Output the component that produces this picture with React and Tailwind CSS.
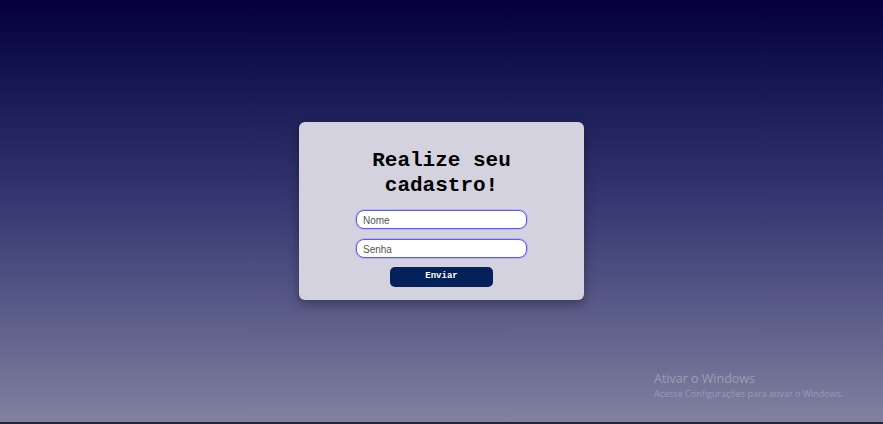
const App = () => {
  return (
    <div className="relative h-[424px] w-[883px] overflow-hidden bg-gradient-to-b from-[#06003c] via-[#3a3a74] to-[#82829f] font-['Liberation_Sans',sans-serif]">
      <div className="flex h-[422px] items-start justify-center pt-[122px]">
        {/* Cadastro Card */}
        <div className="flex w-[285px] flex-col items-center rounded-md bg-[#d4d2df] pb-[13px] pt-[26px] shadow-[0_4px_12px_rgba(0,0,0,0.35)]">
          <h1 className="text-center font-['Liberation_Mono',monospace] text-[21px] font-bold leading-[25px] text-black">
            Realize seu
            <br />
            cadastro!
          </h1>
          <div className="mt-[12px] flex flex-col items-center gap-[10px]">
            <input
              type="text"
              placeholder="Nome"
              className="h-[19px] w-[171px] rounded-[8px] border border-[#5a5af5] bg-white px-[6px] pt-[1px] text-[10px] text-black outline-none ring-1 ring-[#9a9af8]/50 placeholder:text-[#555]"
            />
            <input
              type="password"
              placeholder="Senha"
              className="h-[19px] w-[171px] rounded-[8px] border border-[#5a5af5] bg-white px-[6px] pt-[1px] text-[10px] text-black outline-none ring-1 ring-[#9a9af8]/50 placeholder:text-[#555]"
            />
            <button className="mt-[-1px] h-[20px] w-[103px] rounded-[5px] bg-[#04215a] font-['Liberation_Mono',monospace] text-[9px] font-bold text-white">
              Enviar
            </button>
          </div>
        </div>
      </div>

      {/* Windows activation watermark */}
      <div className="absolute left-[654px] top-[371px] text-[#a9a9c0]">
        <div className="font-['Open_Sans',sans-serif] text-[12.5px] leading-[16px] opacity-80">Ativar o Windows</div>
        <div className="font-['Open_Sans',sans-serif] text-[9px] leading-[13px] opacity-70">
          Acesse Configurações para ativar o Windows.
        </div>
      </div>

      {/* taskbar edge */}
      <div className="absolute bottom-0 left-0 h-[2px] w-full bg-[#1b2b36]" />
    </div>
  );
};

export default App;
